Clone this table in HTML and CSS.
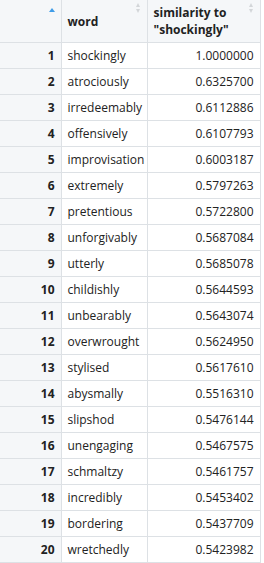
FILE: index.html
```html
<!DOCTYPE html>
<html>
<head>
<meta charset="utf-8">
<link rel="stylesheet" href="styles.css">
</head>
<body>
<table class="grid">
  <colgroup>
    <col class="c-idx">
    <col class="c-word">
    <col class="c-sim">
  </colgroup>
  <thead>
    <tr>
      <th class="h-idx"><span class="sort asc"></span></th>
      <th class="h-text">word<span class="sort both"></span></th>
      <th class="h-text">similarity to<br>"shockingly"<span class="sort both"></span></th>
    </tr>
  </thead>
  <tbody>
    <tr><td class="idx">1</td><td>shockingly</td><td class="num">1.0000000</td></tr>
    <tr><td class="idx">2</td><td>atrociously</td><td class="num">0.6325700</td></tr>
    <tr><td class="idx">3</td><td>irredeemably</td><td class="num">0.6112886</td></tr>
    <tr><td class="idx">4</td><td>offensively</td><td class="num">0.6107793</td></tr>
    <tr><td class="idx">5</td><td>improvisation</td><td class="num">0.6003187</td></tr>
    <tr><td class="idx">6</td><td>extremely</td><td class="num">0.5797263</td></tr>
    <tr><td class="idx">7</td><td>pretentious</td><td class="num">0.5722800</td></tr>
    <tr><td class="idx">8</td><td>unforgivably</td><td class="num">0.5687084</td></tr>
    <tr><td class="idx">9</td><td>utterly</td><td class="num">0.5685078</td></tr>
    <tr><td class="idx">10</td><td>childishly</td><td class="num">0.5644593</td></tr>
    <tr><td class="idx">11</td><td>unbearably</td><td class="num">0.5643074</td></tr>
    <tr><td class="idx">12</td><td>overwrought</td><td class="num">0.5624950</td></tr>
    <tr><td class="idx">13</td><td>stylised</td><td class="num">0.5617610</td></tr>
    <tr><td class="idx">14</td><td>abysmally</td><td class="num">0.5516310</td></tr>
    <tr><td class="idx">15</td><td>slipshod</td><td class="num">0.5476144</td></tr>
    <tr><td class="idx">16</td><td>unengaging</td><td class="num">0.5467575</td></tr>
    <tr><td class="idx">17</td><td>schmaltzy</td><td class="num">0.5461757</td></tr>
    <tr><td class="idx">18</td><td>incredibly</td><td class="num">0.5453402</td></tr>
    <tr><td class="idx">19</td><td>bordering</td><td class="num">0.5437709</td></tr>
    <tr><td class="idx">20</td><td>wretchedly</td><td class="num">0.5423982</td></tr>
  </tbody>
</table>
</body>
</html>
```
FILE: styles.css
```css
html, body {
  margin: 0;
  padding: 0;
  background: #ffffff;
}
.grid {
  border-collapse: collapse;
  table-layout: fixed;
  width: 260px;
  font-family: "Open Sans", sans-serif;
  font-size: 12px;
  color: #222;
}
.c-idx { width: 61px; }
.c-word { width: 86px; }
.c-sim { width: 113px; }
.grid th, .grid td {
  border-right: 1px solid #dde1e5;
  border-bottom: 1px solid #dde1e5;
  padding: 0 6px;
  white-space: nowrap;
  overflow: hidden;
}
.grid th {
  position: relative;
  height: 42px;
  background: #f5f7f9;
  text-align: left;
  font-weight: 700;
  line-height: 17px;
  vertical-align: middle;
}
.grid td {
  height: 25px;
  line-height: 25px;
}
.grid td.idx {
  background: #f5f7f9;
  text-align: right;
  font-weight: 700;
}
.grid td.num {
  text-align: right;
}
.sort {
  position: absolute;
  top: 2px;
  right: 5px;
  width: 7px;
  height: 12px;
}
.sort.asc::before {
  content: "";
  position: absolute;
  top: 6px;
  left: 0;
  border-left: 3.5px solid transparent;
  border-right: 3.5px solid transparent;
  border-bottom: 4px solid #3f9ce8;
}
.sort.both::before, .sort.both::after {
  content: "";
  position: absolute;
  left: 1px;
  border-left: 2.5px solid transparent;
  border-right: 2.5px solid transparent;
}
.sort.both::before {
  top: 1px;
  border-bottom: 4px solid #d3d6d9;
}
.sort.both::after {
  top: 7px;
  border-top: 4px solid #d3d6d9;
}
```
